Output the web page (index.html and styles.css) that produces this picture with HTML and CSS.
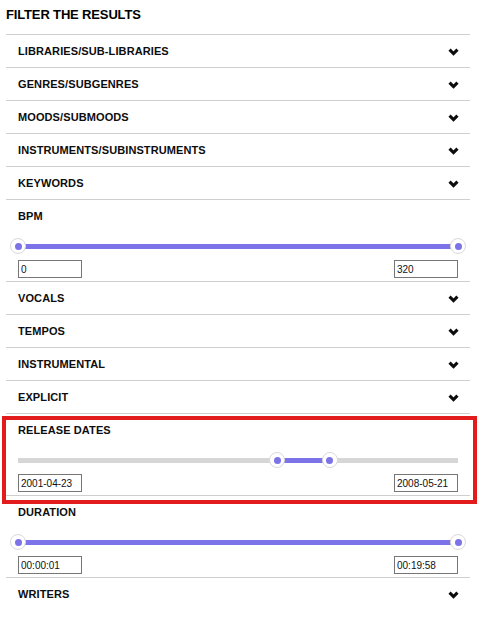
FILE: index.html
```html
<!DOCTYPE html>
<html>
<head>
<meta charset="utf-8">
<link rel="stylesheet" href="styles.css">
</head>
<body>
<div class="panel">
  <h2 class="title">FILTER THE RESULTS</h2>

  <div class="row"><span class="label">LIBRARIES/SUB-LIBRARIES</span><svg class="chev" viewBox="0 0 10 7"><polyline points="1.4,1.4 5,5 8.6,1.4"/></svg></div>
  <div class="row"><span class="label">GENRES/SUBGENRES</span><svg class="chev" viewBox="0 0 10 7"><polyline points="1.4,1.4 5,5 8.6,1.4"/></svg></div>
  <div class="row"><span class="label">MOODS/SUBMOODS</span><svg class="chev" viewBox="0 0 10 7"><polyline points="1.4,1.4 5,5 8.6,1.4"/></svg></div>
  <div class="row"><span class="label">INSTRUMENTS/SUBINSTRUMENTS</span><svg class="chev" viewBox="0 0 10 7"><polyline points="1.4,1.4 5,5 8.6,1.4"/></svg></div>
  <div class="row"><span class="label">KEYWORDS</span><svg class="chev" viewBox="0 0 10 7"><polyline points="1.4,1.4 5,5 8.6,1.4"/></svg></div>

  <div class="section">
    <span class="label">BPM</span>
    <div class="slider">
      <div class="track"></div>
      <div class="fill" style="left:0%;right:0%"></div>
      <div class="thumb" style="left:0%"></div>
      <div class="thumb" style="left:100%"></div>
    </div>
    <div class="inputs">
      <input class="val" type="text" value="0">
      <input class="val" type="text" value="320">
    </div>
  </div>

  <div class="row"><span class="label">VOCALS</span><svg class="chev" viewBox="0 0 10 7"><polyline points="1.4,1.4 5,5 8.6,1.4"/></svg></div>
  <div class="row"><span class="label">TEMPOS</span><svg class="chev" viewBox="0 0 10 7"><polyline points="1.4,1.4 5,5 8.6,1.4"/></svg></div>
  <div class="row"><span class="label">INSTRUMENTAL</span><svg class="chev" viewBox="0 0 10 7"><polyline points="1.4,1.4 5,5 8.6,1.4"/></svg></div>
  <div class="row"><span class="label">EXPLICIT</span><svg class="chev" viewBox="0 0 10 7"><polyline points="1.4,1.4 5,5 8.6,1.4"/></svg></div>

  <div class="section highlighted">
    <span class="label">RELEASE DATES</span>
    <div class="slider">
      <div class="track"></div>
      <div class="fill" style="left:58.9%;right:29.1%"></div>
      <div class="thumb" style="left:58.9%"></div>
      <div class="thumb" style="left:70.9%"></div>
    </div>
    <div class="inputs">
      <input class="val" type="text" value="2001-04-23">
      <input class="val" type="text" value="2008-05-21">
    </div>
    <div class="outline"></div>
  </div>

  <div class="section">
    <span class="label">DURATION</span>
    <div class="slider">
      <div class="track"></div>
      <div class="fill" style="left:0%;right:0%"></div>
      <div class="thumb" style="left:0%"></div>
      <div class="thumb" style="left:100%"></div>
    </div>
    <div class="inputs">
      <input class="val" type="text" value="00:00:01">
      <input class="val" type="text" value="00:19:58">
    </div>
  </div>

  <div class="row"><span class="label">WRITERS</span><svg class="chev" viewBox="0 0 10 7"><polyline points="1.4,1.4 5,5 8.6,1.4"/></svg></div>
</div>
</body>
</html>
```

FILE: styles.css
```css
* { box-sizing: border-box; }

html, body {
  margin: 0;
  padding: 0;
  background: #ffffff;
}

body {
  font-family: "Liberation Sans", Arial, sans-serif;
  color: #111111;
}

.panel {
  width: 470px;
  padding-left: 6px;
}

.title {
  margin: 0;
  font-size: 13px;
  font-weight: bold;
  line-height: 16px;
  letter-spacing: -0.15px;
  padding-top: 7px;
  padding-bottom: 11px;
  color: #000000;
}

.label {
  display: block;
  font-size: 11px;
  font-weight: bold;
  line-height: 13px;
  letter-spacing: 0.1px;
  color: #0d0d0d;
}

.row {
  border-top: 1px solid #cfcfcf;
  height: 33px;
  padding: 10px 12px 9px 12px;
  display: flex;
  justify-content: space-between;
  align-items: center;
}

.chev {
  width: 11px;
  height: 8px;
  margin-top: 1px;
  margin-right: -0.5px;
  fill: none;
  stroke: #0d0d0d;
  stroke-width: 2.8;
  stroke-linecap: butt;
  stroke-linejoin: miter;
}

.section {
  border-top: 1px solid #cfcfcf;
  padding: 10px 12px 3px 12px;
}

.slider {
  position: relative;
  height: 16px;
  margin-top: 15px;
}

.track {
  position: absolute;
  left: 0;
  right: 0;
  top: 5.5px;
  height: 5px;
  background: #d6d6d6;
}

.fill {
  position: absolute;
  top: 5.5px;
  height: 5px;
  background: #7c73e8;
}

.thumb {
  position: absolute;
  top: 0;
  width: 16px;
  height: 16px;
  margin-left: -8px;
  border-radius: 50%;
  background: #ffffff;
  border: 1px solid #d9d9d9;
  display: flex;
  align-items: center;
  justify-content: center;
}

.thumb::after {
  content: "";
  width: 7px;
  height: 7px;
  border-radius: 50%;
  background: #7c73e8;
}

.inputs {
  display: flex;
  justify-content: space-between;
  margin-top: 6px;
}

.val {
  width: 64px;
  height: 18px;
  margin: 0;
  border: 1px solid #767676;
  border-radius: 0;
  padding: 0 2px;
  font-family: "Liberation Sans", Arial, sans-serif;
  font-size: 10px;
  color: #111111;
  background: #ffffff;
  outline: none;
}

.highlighted {
  position: relative;
}

.outline {
  position: absolute;
  left: -4px;
  right: -7px;
  top: 2px;
  bottom: -9px;
  border: 4px solid #e21c1c;
  pointer-events: none;
}
```
